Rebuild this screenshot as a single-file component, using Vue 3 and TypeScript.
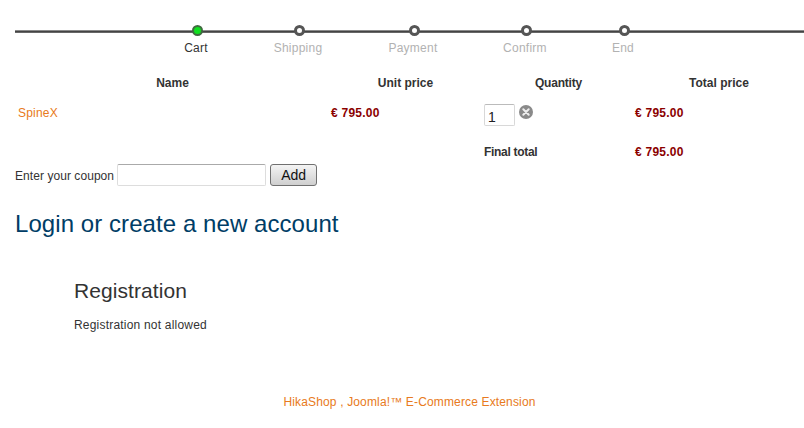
<script setup lang="ts">
interface Step { label: string; active?: boolean; width: number }
const steps: Step[] = [
  { label: 'Cart', active: true, width: 96 },
  { label: 'Shipping', width: 108 },
  { label: 'Payment', width: 122 },
  { label: 'Confirm', width: 102 },
  { label: 'End', width: 94 },
]
const price = '€ 795.00'
</script>

<template>
  <div class="page">
    <div class="steps">
      <div v-for="s in steps" :key="s.label" class="step" :class="{ active: s.active }" :style="{ width: s.width + 'px' }">
        <span class="dot"></span>
        <span class="label">{{ s.label }}</span>
      </div>
    </div>

    <table class="cart">
      <colgroup>
        <col class="c1" /><col class="c2" /><col class="c3" /><col class="c4" />
      </colgroup>
      <thead>
        <tr><th class="th-name">Name</th><th class="th-unit">Unit price</th><th class="th-qty">Quantity</th><th class="th-total">Total price</th></tr>
      </thead>
      <tbody>
        <tr class="item">
          <td><a class="link">SpineX</a></td>
          <td class="price">{{ price }}</td>
          <td>
            <div class="qty">
              <input class="qty-input" type="text" value="1" />
              <svg class="remove" width="14" height="14" viewBox="0 0 14 14">
                <circle cx="7" cy="7" r="7" fill="#8a8a8a" />
                <path d="M4.3 4.3l5.4 5.4M9.7 4.3l-5.4 5.4" stroke="#eee" stroke-width="2" stroke-linecap="round" />
              </svg>
            </div>
          </td>
          <td class="price">{{ price }}</td>
        </tr>
        <tr class="final">
          <td></td><td></td>
          <td class="final-label">Final total</td>
          <td class="price">{{ price }}</td>
        </tr>
      </tbody>
    </table>

    <div class="coupon">
      <label>Enter your coupon</label>
      <input class="coupon-input" type="text" />
      <button class="add" type="button">Add</button>
    </div>

    <h1 class="title">Login or create a new account</h1>

    <section class="register">
      <h2>Registration</h2>
      <p>Registration not allowed</p>
    </section>

    <footer class="foot">HikaShop , Joomla!™ E-Commerce Extension</footer>
  </div>
</template>

<style>
html, body { margin: 0; background: #fff; }
</style>

<style scoped>
.page {
  width: 804px;
  height: 428px;
  box-sizing: border-box;
  padding: 24px 0 0 15px;
  font-family: "Liberation Sans", Arial, sans-serif;
  font-size: 12px;
  color: #333;
  overflow: hidden;
}
.steps {
  display: flex;
  padding-left: 134px;
  background: linear-gradient(#8a8a8a 0 1px, #444 1px 2px, #666 2px 3px) no-repeat 0 6px / 100% 3px;
  height: 32px;
}
.step {
  display: flex;
  flex-direction: column;
  align-items: center;
  flex: none;
  color: #b2b2b2;
  letter-spacing: 0.25px;
}
.step.active { color: #333; }
.dot {
  box-sizing: content-box;
  border: 3px solid #555;
  border-radius: 50%;
  background: #fff;
  width: 5px;
  height: 5px;
  margin-top: 1px;
}
.step.active .dot {
  background: #10e020;
  border: 2px solid #3f6b3f;
  width: 7px;
  height: 7px;
}
.label { margin-top: 5px; line-height: 14px; margin-left: -2px; }
.cart {
  width: 789px;
  table-layout: fixed;
  border-collapse: collapse;
  margin-top: 18px;
}
.c1 { width: 313px; }
.c2 { width: 153px; }
.c3 { width: 151px; }
.c4 { width: 172px; }
th {
  height: 18px;
  padding: 0 3px;
  font-weight: bold;
  text-align: center;
  color: #333;
}
.th-name { padding-left: 5px; }
.th-unit { padding-left: 5px; }
.th-qty { letter-spacing: -0.2px; padding-left: 7px; }
.th-total { padding-left: 5px; }
td { padding: 0 3px; vertical-align: middle; }
.item td { height: 42px; }
.final td { height: 36px; }
.link { color: #e87a20; letter-spacing: 0.2px; }
.price { font-weight: bold; color: #8b0000; letter-spacing: 0.25px; }
.final-label { font-weight: bold; color: #333; letter-spacing: -0.3px; }
.qty { display: flex; align-items: flex-start; gap: 4px; margin-top: 4px; }
.qty-input {
  width: 31px;
  height: 22px;
  box-sizing: border-box;
  padding: 3px 0 0 3px;
  border: 1px solid #d8d8d8;
  border-top-color: #bbb;
  border-radius: 2px;
  font: 14px "Liberation Sans", Arial, sans-serif;
  color: #222;
  outline: none;
}
.remove { flex: none; margin-top: 1px; }
.coupon { display: flex; align-items: center; height: 22px; margin-top: -6px; letter-spacing: 0.06px; }
.coupon label { margin: 2px 3px 0 0; }
.coupon-input {
  width: 149px;
  height: 22px;
  box-sizing: border-box;
  border: 1px solid #ddd;
  border-top-color: #aaa;
  border-radius: 2px;
  outline: none;
}
.add {
  width: 47px;
  height: 22px;
  margin-left: 4px;
  padding: 0;
  border: 1px solid #707070;
  border-radius: 3px;
  background: linear-gradient(#f4f4f4, #cfcfcf);
  font: 14px "Liberation Sans", Arial, sans-serif;
  color: #111;
}
.title {
  margin: 24px 0 0;
  font-size: 24px;
  font-weight: normal;
  line-height: 28px;
  color: #003d66;
  letter-spacing: 0.07px;
}
.register { padding-left: 59px; margin-top: 41px; }
.register h2 {
  margin: 0;
  font-size: 21px;
  font-weight: normal;
  line-height: 24px;
  color: #333;
  letter-spacing: 0.08px;
}
.register p { margin: 15px 0 0; line-height: 14px; letter-spacing: 0.2px; }
.foot {
  margin-top: 63px;
  width: 789px;
  text-align: center;
  color: #e87a20;
  line-height: 14px;
  letter-spacing: 0.15px;
}
</style>
